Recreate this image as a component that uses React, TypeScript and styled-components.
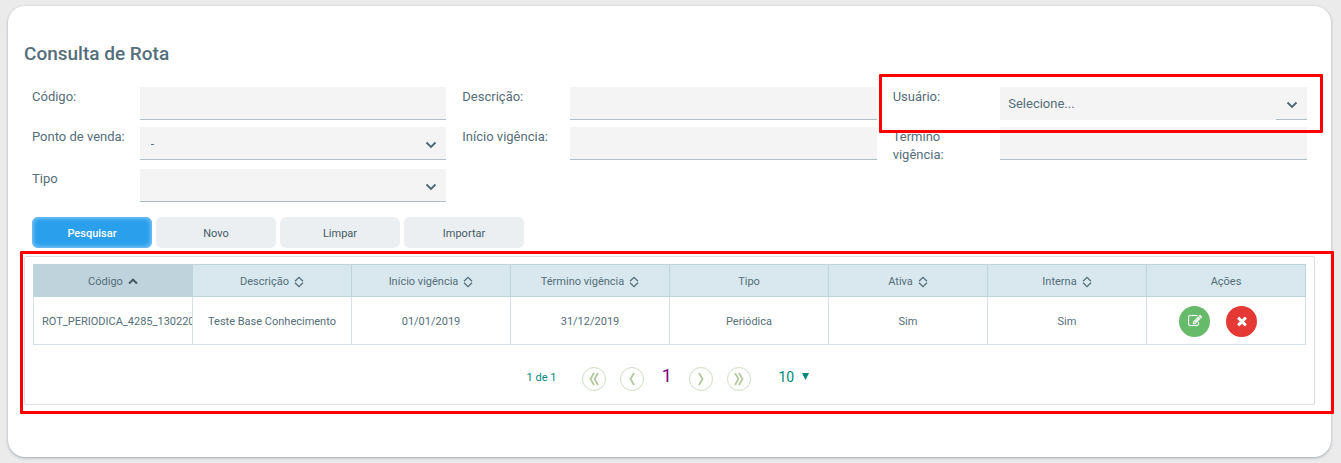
import React from "react";
import styled, { createGlobalStyle, css } from "styled-components";

const GlobalStyle = createGlobalStyle`
  *, *::before, *::after { box-sizing: border-box; }
  body {
    margin: 0;
    background: #ebebeb;
    color: #546e7a;
    font-family: Roboto, "Liberation Sans", sans-serif;
    font-size: 14px;
  }
  button, input, select { font: inherit; color: inherit; }
`;

const Card = styled.main`
  margin: 6px 10px 6px 8px;
  padding: 36px 16px 52px;
  background: #fff;
  border-radius: 17px;
  box-shadow: 0 1px 3px rgba(70, 85, 105, 0.45);
`;

const Title = styled.h1`
  margin: 0 0 21px;
  font-size: 19px;
  line-height: 24px;
  font-weight: 500;
`;

const FieldGrid = styled.div`
  display: grid;
  grid-template-columns: repeat(3, 1fr);
  row-gap: 5px;
`;

const Field = styled.div`
  position: relative;
  display: grid;
  grid-template-columns: 1fr 3fr;
  align-items: start;
`;

const Label = styled.label`
  padding: 1px 0 0 8px;
  font-size: 13px;
  line-height: 18px;
`;

const ControlBox = styled.div`
  display: flex;
  position: relative;
  margin: 0 8px 2px;
  height: 33px;
`;

const controlStyle = css`
  flex: 1;
  min-width: 0;
  height: 33px;
  border: 0;
  border-radius: 0;
  border-bottom: 1px solid #b0bec5;
  background: #f4f4f4;
  outline: none;
`;

const TextInput = styled.input`
  ${controlStyle}
  padding: 0 8px;
`;

const SelectInput = styled.select<{ $plain?: boolean }>`
  ${controlStyle}
  appearance: none;
  padding: 0 32px 0 ${(p) => (p.$plain ? 8 : 11)}px;
  font-size: 13px;
  ${(p) => p.$plain && "border-bottom-color: #f4f4f4;"}
`;

const SelectTrigger = styled.span<{ $underlined?: boolean }>`
  position: absolute;
  right: 0;
  top: 0;
  width: 31px;
  height: 33px;
  padding-top: 3px;
  display: flex;
  align-items: center;
  justify-content: center;
  pointer-events: none;
  border-bottom: 1px solid ${(p) => (p.$underlined ? "#b0bec5" : "transparent")};
`;

const Highlight = styled.div<{ $inset: string }>`
  position: absolute;
  inset: ${(p) => p.$inset};
  border: 3px solid #f00;
  border-radius: 1px;
  pointer-events: none;
  z-index: 1;
`;

const ButtonBar = styled.div`
  display: flex;
  gap: 4px;
  margin: 13px 8px 8px;
`;

const ActionButton = styled.button<{ $primary?: boolean }>`
  width: 120px;
  height: 31px;
  padding: 2px 0 0;
  border: 0;
  border-radius: 6px;
  font-size: 11px;
  cursor: pointer;
  background: ${(p) => (p.$primary ? "#2a9fec" : "#eceff1")};
  color: ${(p) => (p.$primary ? "#fff" : "#455a64")};
  font-weight: ${(p) => (p.$primary ? 500 : 400)};
  ${(p) => p.$primary && "box-shadow: inset 0 0 4px 1px #8fcdf8;"}
`;

const Panel = styled.section`
  position: relative;
  padding: 7px 8px 13px;
  border: 1px solid #dcdfe1;
  border-radius: 2px;
`;

const DataTable = styled.table`
  width: 100%;
  table-layout: fixed;
  border-collapse: collapse;
  text-align: center;
`;

const HeaderCell = styled.th<{ $sorted?: boolean }>`
  height: 32px;
  padding: 2px 8px 0;
  border: 1px solid #bed3dc;
  background: ${(p) => (p.$sorted ? "#bfd3dc" : "#d9e8ee")};
  font-size: 11px;
  font-weight: 400;
  white-space: nowrap;
`;

const HeaderContent = styled.span`
  display: inline-flex;
  align-items: center;
  gap: 5px;
`;

const Cell = styled.td`
  height: 48px;
  padding: 1px 8px 0;
  border: 1px solid #d5e1e6;
  font-size: 11px;
  white-space: nowrap;
  overflow: hidden;
`;

const RowActions = styled.div`
  display: flex;
  justify-content: center;
`;

const RoundButton = styled.button<{ $color: string }>`
  display: flex;
  align-items: center;
  justify-content: center;
  width: 31px;
  height: 31px;
  margin-right: 16px;
  padding: 0;
  border: 0;
  border-radius: 50%;
  background: ${(p) => p.$color};
  color: #fff;
  cursor: pointer;
`;

const Pagination = styled.nav`
  display: flex;
  align-items: center;
  justify-content: center;
  margin-top: 19px;
  height: 27px;
  color: #00897b;
`;

const PageStatus = styled.span`
  font-size: 11px;
  margin-right: 26px;
`;

const PageButton = styled.button`
  display: flex;
  align-items: center;
  justify-content: center;
  width: 24px;
  height: 24px;
  margin-top: 2px;
  padding: 0;
  border: 1px solid #d0dcc4;
  border-radius: 50%;
  background: none;
  color: #b4c8a0;
  cursor: pointer;
`;

const PageGroup = styled.div`
  display: flex;
  gap: 14px;
`;

const CurrentPage = styled.a`
  width: 45px;
  padding-bottom: 5px;
  text-align: center;
  font-size: 18px;
  font-weight: 400;
  color: #800080;
  text-decoration: none;
`;

const PageSizeBox = styled.div`
  position: relative;
  display: flex;
  align-items: center;
  margin-left: 27px;
  padding-bottom: 2px;
`;

const PageSize = styled.select`
  appearance: none;
  width: 34px;
  padding: 0;
  border: 0;
  background: none;
  font-size: 14px;
  outline: none;
`;

const PageSizeArrow = styled.svg`
  position: absolute;
  right: 3px;
  pointer-events: none;
`;

const Chevron = () => (
  <svg width="12" height="8" viewBox="0 0 12 8" fill="none" stroke="#4a6572" strokeWidth="1.800" aria-hidden="true">
    <path d="M1.500 1.500L6 6l4.500-4.500" />
  </svg>
);

const SortBoth = () => (
  <svg width="10" height="12" viewBox="0 0 10 12" fill="none" stroke="currentColor" strokeWidth="1.300" aria-hidden="true">
    <path d="M1 5.300L5 1.300l4 4M1 6.700l4 4 4-4" />
  </svg>
);

const SortUp = () => (
  <svg width="10" height="7" viewBox="0 0 10 7" fill="none" stroke="#455a64" strokeWidth="2" aria-hidden="true">
    <path d="M1 5.500L5 1.700l4 3.800" />
  </svg>
);

const PageArrow = ({ double, right }: { double?: boolean; right?: boolean }) => (
  <svg width="14" height="14" viewBox="0 0 14 14" fill="none" stroke="currentColor" strokeWidth="1.800" aria-hidden="true">
    <g transform={right ? "matrix(-1 0 0 1 14 0)" : undefined}>
      {double ? <path d="M7 1L3.500 7L7 13M11 1L7.500 7l3.500 6" /> : <path d="M9 1L5.500 7L9 13" />}
    </g>
  </svg>
);

const EditIcon = () => (
  <svg width="14" height="14" viewBox="0 0 1792 1792" fill="currentColor" stroke="currentColor" strokeWidth="30" aria-hidden="true">
    <path d="M888 1184l116-116-152-152-116 116v56h96v96h56zm440-720q-16-16-33 1l-350 350q-17 17-1 33t33-1l350-350q17-17 1-33zm80 594v190q0 119-84.500 203.500t-203.500 84.500h-832q-119 0-203.500-84.500t-84.500-203.500v-832q0-119 84.500-203.500t203.500-84.500h832q63 0 117 25 15 7 18 23 3 17-9 29l-49 49q-14 14-32 8-23-6-45-6h-832q-66 0-113 47t-47 113v832q0 66 47 113t113 47h832q66 0 113-47t47-113v-126q0-13 9-22l64-64q15-15 35-7t20 29zm-96-738l288 288-672 672h-288v-288zm444 132l-92 92-288-288 92-92q28-28 68-28t68 28l152 152q28 28 28 68t-28 68z" />
  </svg>
);

const RemoveIcon = () => (
  <svg width="14" height="14" viewBox="0 0 1792 1792" fill="currentColor" aria-hidden="true">
    <path d="M1490 1322q0 40-28 68l-136 136q-28 28-68 28t-68-28l-294-294-294 294q-28 28-68 28t-68-28l-136-136q-28-28-28-68t28-68l294-294-294-294q-28-28-28-68t28-68l136-136q28-28 68-28t68 28l294 294 294-294q28-28 68-28t68 28l136 136q28 28 28 68t-28 68l-294 294 294 294q28 28 28 68z" />
  </svg>
);

type FieldDef = {
  id: string;
  label: string;
  kind: "text" | "select" | "menu";
  value?: string;
  highlighted?: boolean;
};

const fields: FieldDef[] = [
  { id: "codigo", label: "Código:", kind: "text" },
  { id: "descricao", label: "Descrição:", kind: "text" },
  { id: "usuario", label: "Usuário:", kind: "menu", value: "Selecione...", highlighted: true },
  { id: "ponto", label: "Ponto de venda:", kind: "select", value: "-" },
  { id: "inicio", label: "Início vigência:", kind: "text" },
  { id: "termino", label: "Término vigência:", kind: "text" },
  { id: "tipo", label: "Tipo", kind: "select", value: "" },
];

const columns: { title: string; sort?: "both" | "up" }[] = [
  { title: "Código", sort: "up" },
  { title: "Descrição", sort: "both" },
  { title: "Início vigência", sort: "both" },
  { title: "Término vigência", sort: "both" },
  { title: "Tipo" },
  { title: "Ativa", sort: "both" },
  { title: "Interna", sort: "both" },
  { title: "Ações" },
];

const row = ["ROT_PERIODICA_4285_13022019", "Teste Base Conhecimento", "01/01/2019", "31/12/2019", "Periódica", "Sim", "Sim"];

export default function App() {
  return (
    <>
      <GlobalStyle />
      <Card>
        <Title>Consulta de Rota</Title>
        <FieldGrid>
          {fields.map((f) => (
            <Field key={f.id}>
              <Label htmlFor={f.id}>{f.label}</Label>
              <ControlBox>
                {f.kind === "text" ? (
                  <TextInput id={f.id} type="text" />
                ) : (
                  <>
                    <SelectInput id={f.id} $plain={f.kind === "menu"}>
                      <option>{f.value}</option>
                    </SelectInput>
                    <SelectTrigger $underlined={f.kind === "menu"}>
                      <Chevron />
                    </SelectTrigger>
                  </>
                )}
              </ControlBox>
              {f.highlighted && <Highlight $inset="-13px -8px -11px -6px" />}
            </Field>
          ))}
        </FieldGrid>
        <ButtonBar>
          <ActionButton type="button" $primary>Pesquisar</ActionButton>
          <ActionButton type="button">Novo</ActionButton>
          <ActionButton type="button">Limpar</ActionButton>
          <ActionButton type="button">Importar</ActionButton>
        </ButtonBar>
        <Panel>
          <DataTable>
            <thead>
              <tr>
                {columns.map((c) => (
                  <HeaderCell key={c.title} scope="col" $sorted={c.sort === "up"}>
                    <HeaderContent>
                      {c.title}
                      {c.sort === "both" && <SortBoth />}
                      {c.sort === "up" && <SortUp />}
                    </HeaderContent>
                  </HeaderCell>
                ))}
              </tr>
            </thead>
            <tbody>
              <tr>
                {row.map((value, i) => (
                  <Cell key={i}>{value}</Cell>
                ))}
                <Cell>
                  <RowActions>
                    <RoundButton type="button" aria-label="Editar" $color="#66bb6a"><EditIcon /></RoundButton>
                    <RoundButton type="button" aria-label="Excluir" $color="#e53935"><RemoveIcon /></RoundButton>
                  </RowActions>
                </Cell>
              </tr>
            </tbody>
          </DataTable>
          <Pagination aria-label="Paginação">
            <PageStatus>1 de 1</PageStatus>
            <PageGroup>
              <PageButton type="button" aria-label="Primeira página"><PageArrow double /></PageButton>
              <PageButton type="button" aria-label="Página anterior"><PageArrow /></PageButton>
            </PageGroup>
            <CurrentPage href="#1">1</CurrentPage>
            <PageGroup>
              <PageButton type="button" aria-label="Próxima página"><PageArrow right /></PageButton>
              <PageButton type="button" aria-label="Última página"><PageArrow double right /></PageButton>
            </PageGroup>
            <PageSizeBox>
              <PageSize aria-label="Itens por página">
                <option>10</option>
              </PageSize>
              <PageSizeArrow width="7" height="7" viewBox="0 0 6 6" fill="currentColor" aria-hidden="true">
                <path d="M0 0h6L3 6z" />
              </PageSizeArrow>
            </PageSizeBox>
          </Pagination>
          <Highlight $inset="-6px -20px -10px -5px" />
        </Panel>
      </Card>
    </>
  );
}
